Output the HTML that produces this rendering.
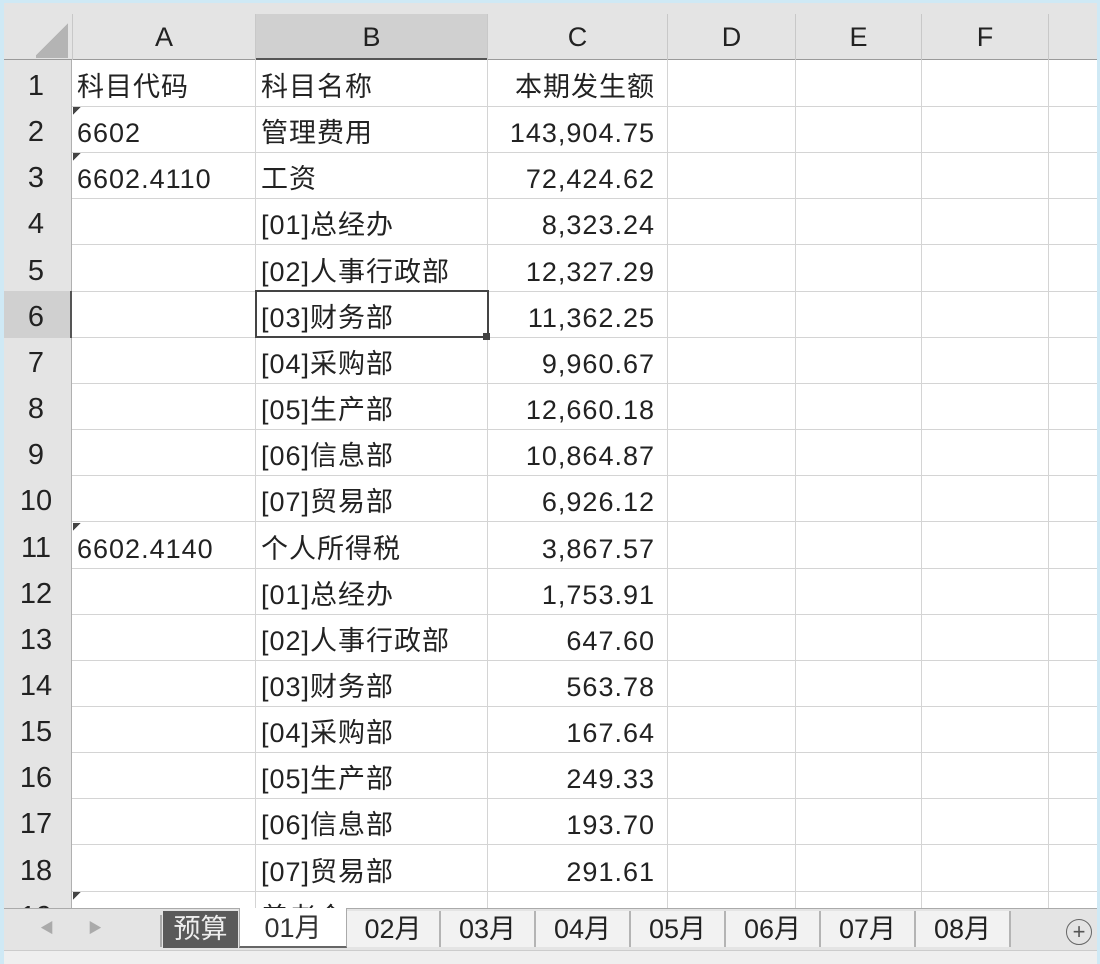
<!DOCTYPE html><html><head><meta charset="utf-8"><style>
body{margin:0;width:1100px;height:964px;background:#cfe9f5;overflow:hidden;font-family:"Liberation Sans","Noto Sans CJK SC",sans-serif;}
#s{position:absolute;left:4px;top:3px;width:1093px;height:961px;background:#fff;overflow:hidden}
.a{position:absolute;box-sizing:border-box;white-space:nowrap}
.c{font-size:27px;color:#222;line-height:46px;padding-top:4px;letter-spacing:1px}
</style></head><body><div id="s"></div>
<script>
const s=document.getElementById('s');const o=4,t=3;
function d(x,y,w,h,st,tx,cl){const e=document.createElement('div');e.className='a '+(cl||'');e.style.cssText=`left:${x-o}px;top:${y-t}px;width:${w}px;height:${h}px;`+(st||'');if(tx!==undefined)e.textContent=tx;s.appendChild(e);return e}
const cols=[72,255,487,667,795,921,1048,1097];
d(0,0,1100,60,'background:#e4e4e4;border-bottom:1px solid #9a9a9a');
d(255,14,232,46,'background:#d0d0d0;border-bottom:2px solid #555');
d(36,20,32,38,'background:linear-gradient(135deg,transparent 50%,#b4b4b4 50%)');
const L=['A','B','C','D','E','F'];
for(let i=0;i<6;i++){d(cols[i],14,cols[i+1]-cols[i],46,'font-size:27px;color:#222;text-align:center;line-height:46px;border-left:1px solid #c8c8c8',L[i]);}
d(1048,14,60,46,'border-left:1px solid #c8c8c8');
d(0,60,72,850,'background:#e4e4e4;border-right:1px solid #b0b0b0');
const data=[['科目代码','科目名称','本期发生额'],['6602','管理费用','143,904.75'],['6602.4110','工资','72,424.62'],['','[01]总经办','8,323.24'],['','[02]人事行政部','12,327.29'],['','[03]财务部','11,362.25'],['','[04]采购部','9,960.67'],['','[05]生产部','12,660.18'],['','[06]信息部','10,864.87'],['','[07]贸易部','6,926.12'],['6602.4140','个人所得税','3,867.57'],['','[01]总经办','1,753.91'],['','[02]人事行政部','647.60'],['','[03]财务部','563.78'],['','[04]采购部','167.64'],['','[05]生产部','249.33'],['','[06]信息部','193.70'],['','[07]贸易部','291.61'],['6602.4150','养老金','3,061.90']];
for(let r=0;r<19;r++){const y=Math.round(60+r*46.15);
 if(r==5)d(0,y,72,47,'background:#d0d0d0;border-right:2px solid #555');
 d(0,y,72,47,'font-size:29px;color:#222;text-align:center;line-height:46px;padding-top:3px',String(r+1));
 d(72,y+46,1030,1,'background:#d4d4d4');
 const[a,b,c]=data[r];
 d(77,y,176,46,'',a,'c');d(261,y,226,46,'',b,'c');d(487,y,168,46,'text-align:right',c,'c');
 if(a&&r>0)d(73,y+1,8,8,'background:linear-gradient(135deg,#444 50%,transparent 50%)');
}
for(let i=1;i<7;i++)d(cols[i],60,1,850,'background:#d4d4d4');
d(255,290,234,48,'border:2px solid #444');d(483,333,7,7,'background:#444');
d(0,908,1100,42,'background:#e4e4e4;border-top:1px solid #aaa');
d(0,950,1100,14,'background:#efefef;border-top:1px solid #ccc');
d(40,918,10,20,'color:#aaa;font-size:14px','◀');d(88,918,10,20,'color:#aaa;font-size:14px','▶');
d(160,915,2,32,'background:#aaa');
d(163,911,75,37,'background:#5a5a5a;color:#eee;font-size:27px;text-align:center;line-height:36px','预算');
d(239,908,108,40,'background:#fff;font-size:27px;text-align:center;line-height:40px;color:#333;border-bottom:2px solid #666;border-left:1px solid #aaa;border-right:1px solid #aaa','01月');
const tx=[347,441,536,631,726,821,916,1011],nm=['02月','03月','04月','05月','06月','07月','08月'];
for(let i=0;i<7;i++){d(tx[i],911,tx[i+1]-tx[i],36,'background:#f2f2f2;font-size:27px;text-align:center;line-height:36px;color:#222;border-right:2px solid #b4b4b4',nm[i]);}
d(1066,919,26,26,'border:1.5px solid #666;border-radius:50%;text-align:center;line-height:24px;font-size:22px;color:#555','+');
</script></body></html>
